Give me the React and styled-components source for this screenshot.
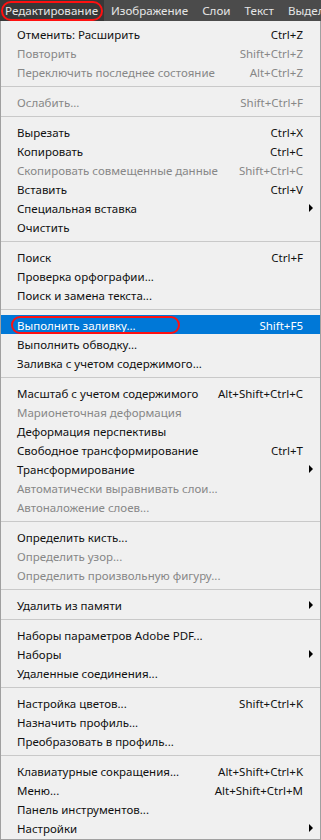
import React from 'react'
import styled, { createGlobalStyle } from 'styled-components'

const Global = createGlobalStyle`
  html, body { margin: 0; padding: 0; background: #f0f0f0; }
  body { font-family: "Noto Sans", "Open Sans", sans-serif; font-size: 11.5px; }
`

const Page = styled.div`
  width: 321px;
  height: 840px;
  overflow: hidden;
  display: flex;
  flex-direction: column;
`

const MenuBar = styled.div`
  height: 21px;
  background: #4b4b4b;
  display: flex;
  align-items: center;
  white-space: nowrap;
  overflow: hidden;
  flex-shrink: 0;
`

const BarItem = styled.div`
  position: relative;
  height: 21px;
  line-height: 21px;
  padding: 0 ${p => (p.$active ? '6px' : '7px')} 0 ${p => (p.$active ? '5px' : '7px')};
  color: #e6e6e6;
  font-size: 11.6px;
  background: ${p => (p.$active ? '#383838' : 'transparent')};
`

const Ring = styled.span`
  position: absolute;
  left: ${p => p.$l}px;
  right: ${p => p.$r}px;
  top: ${p => p.$t}px;
  bottom: ${p => p.$b}px;
  border: 2px solid #ff1010;
  border-radius: 10px;
  pointer-events: none;
`

const Menu = styled.div`
  flex: 1;
  background: #f0f0f0;
  border: 1px solid #a0a0a0;
  border-top: none;
  padding: 3px 0 0;
`

const Row = styled.div`
  position: relative;
  height: 19px;
  display: flex;
  align-items: center;
  padding: 1px 17px 0 16px;
  box-sizing: border-box;
  color: ${p => (p.$hl ? '#ffffff' : p.$off ? '#878787' : '#111111')};
  background: ${p => (p.$hl ? '#0078d7' : 'transparent')};
  white-space: nowrap;
`

const Label = styled.span`
  flex: 1;
`

const Key = styled.span`
  text-align: right;
`

const Arrow = styled.span`
  position: absolute;
  right: 7px;
  top: 6px;
  width: 0;
  height: 0;
  border-top: 4px solid transparent;
  border-bottom: 4px solid transparent;
  border-left: 4px solid #000;
`

const Sep = styled.div`
  height: 11px;
  display: flex;
  align-items: center;
  &::after {
    content: '';
    display: block;
    width: 100%;
    height: 1px;
    background: #c9c9c9;
  }
`

const groups = [
  [
    ['Отменить: Расширить', 'Ctrl+Z'],
    ['Повторить', 'Shift+Ctrl+Z', 'off'],
    ['Переключить последнее состояние', 'Alt+Ctrl+Z', 'off'],
  ],
  [['Ослабить...', 'Shift+Ctrl+F', 'off']],
  [
    ['Вырезать', 'Ctrl+X'],
    ['Копировать', 'Ctrl+C'],
    ['Скопировать совмещенные данные', 'Shift+Ctrl+C', 'off'],
    ['Вставить', 'Ctrl+V'],
    ['Специальная вставка', '', 'sub'],
    ['Очистить', ''],
  ],
  [
    ['Поиск', 'Ctrl+F'],
    ['Проверка орфографии...', ''],
    ['Поиск и замена текста...', ''],
  ],
  [
    ['Выполнить заливку...', 'Shift+F5', 'hl'],
    ['Выполнить обводку...', ''],
    ['Заливка с учетом содержимого...', ''],
  ],
  [
    ['Масштаб с учетом содержимого', 'Alt+Shift+Ctrl+C'],
    ['Марионеточная деформация', '', 'off'],
    ['Деформация перспективы', ''],
    ['Свободное трансформирование', 'Ctrl+T'],
    ['Трансформирование', '', 'sub'],
    ['Автоматически выравнивать слои...', '', 'off'],
    ['Автоналожение слоев...', '', 'off'],
  ],
  [
    ['Определить кисть...', ''],
    ['Определить узор...', '', 'off'],
    ['Определить произвольную фигуру...', '', 'off'],
  ],
  [['Удалить из памяти', '', 'sub']],
  [
    ['Наборы параметров Adobe PDF...', ''],
    ['Наборы', '', 'sub'],
    ['Удаленные соединения...', ''],
  ],
  [
    ['Настройка цветов...', 'Shift+Ctrl+K'],
    ['Назначить профиль...', ''],
    ['Преобразовать в профиль...', ''],
  ],
  [
    ['Клавиатурные сокращения...', 'Alt+Shift+Ctrl+K'],
    ['Меню...', 'Alt+Shift+Ctrl+M'],
    ['Панель инструментов...', ''],
    ['Настройки', '', 'sub'],
  ],
]

const barItems = ['Редактирование', 'Изображение', 'Слои', 'Текст', 'Выдел']

export default function App() {
  return (
    <>
      <Global />
      <Page>
        <MenuBar>
          {barItems.map((t, i) => (
            <BarItem key={t} $active={i === 0}>
              {t}
              {i === 0 && <Ring $l={1} $r={1} $t={1} $b={0} />}
            </BarItem>
          ))}
        </MenuBar>
        <Menu>
          {groups.map((g, gi) => (
            <React.Fragment key={gi}>
              {gi > 0 && <Sep />}
              {g.map(([label, key, flag]) => (
                <Row key={label} $off={flag === 'off'} $hl={flag === 'hl'}>
                  <Label>{label}</Label>
                  {key && <Key>{key}</Key>}
                  {flag === 'sub' && <Arrow />}
                  {flag === 'hl' && <Ring $l={10} $r={140} $t={1} $b={0} />}
                </Row>
              ))}
            </React.Fragment>
          ))}
        </Menu>
      </Page>
    </>
  )
}
